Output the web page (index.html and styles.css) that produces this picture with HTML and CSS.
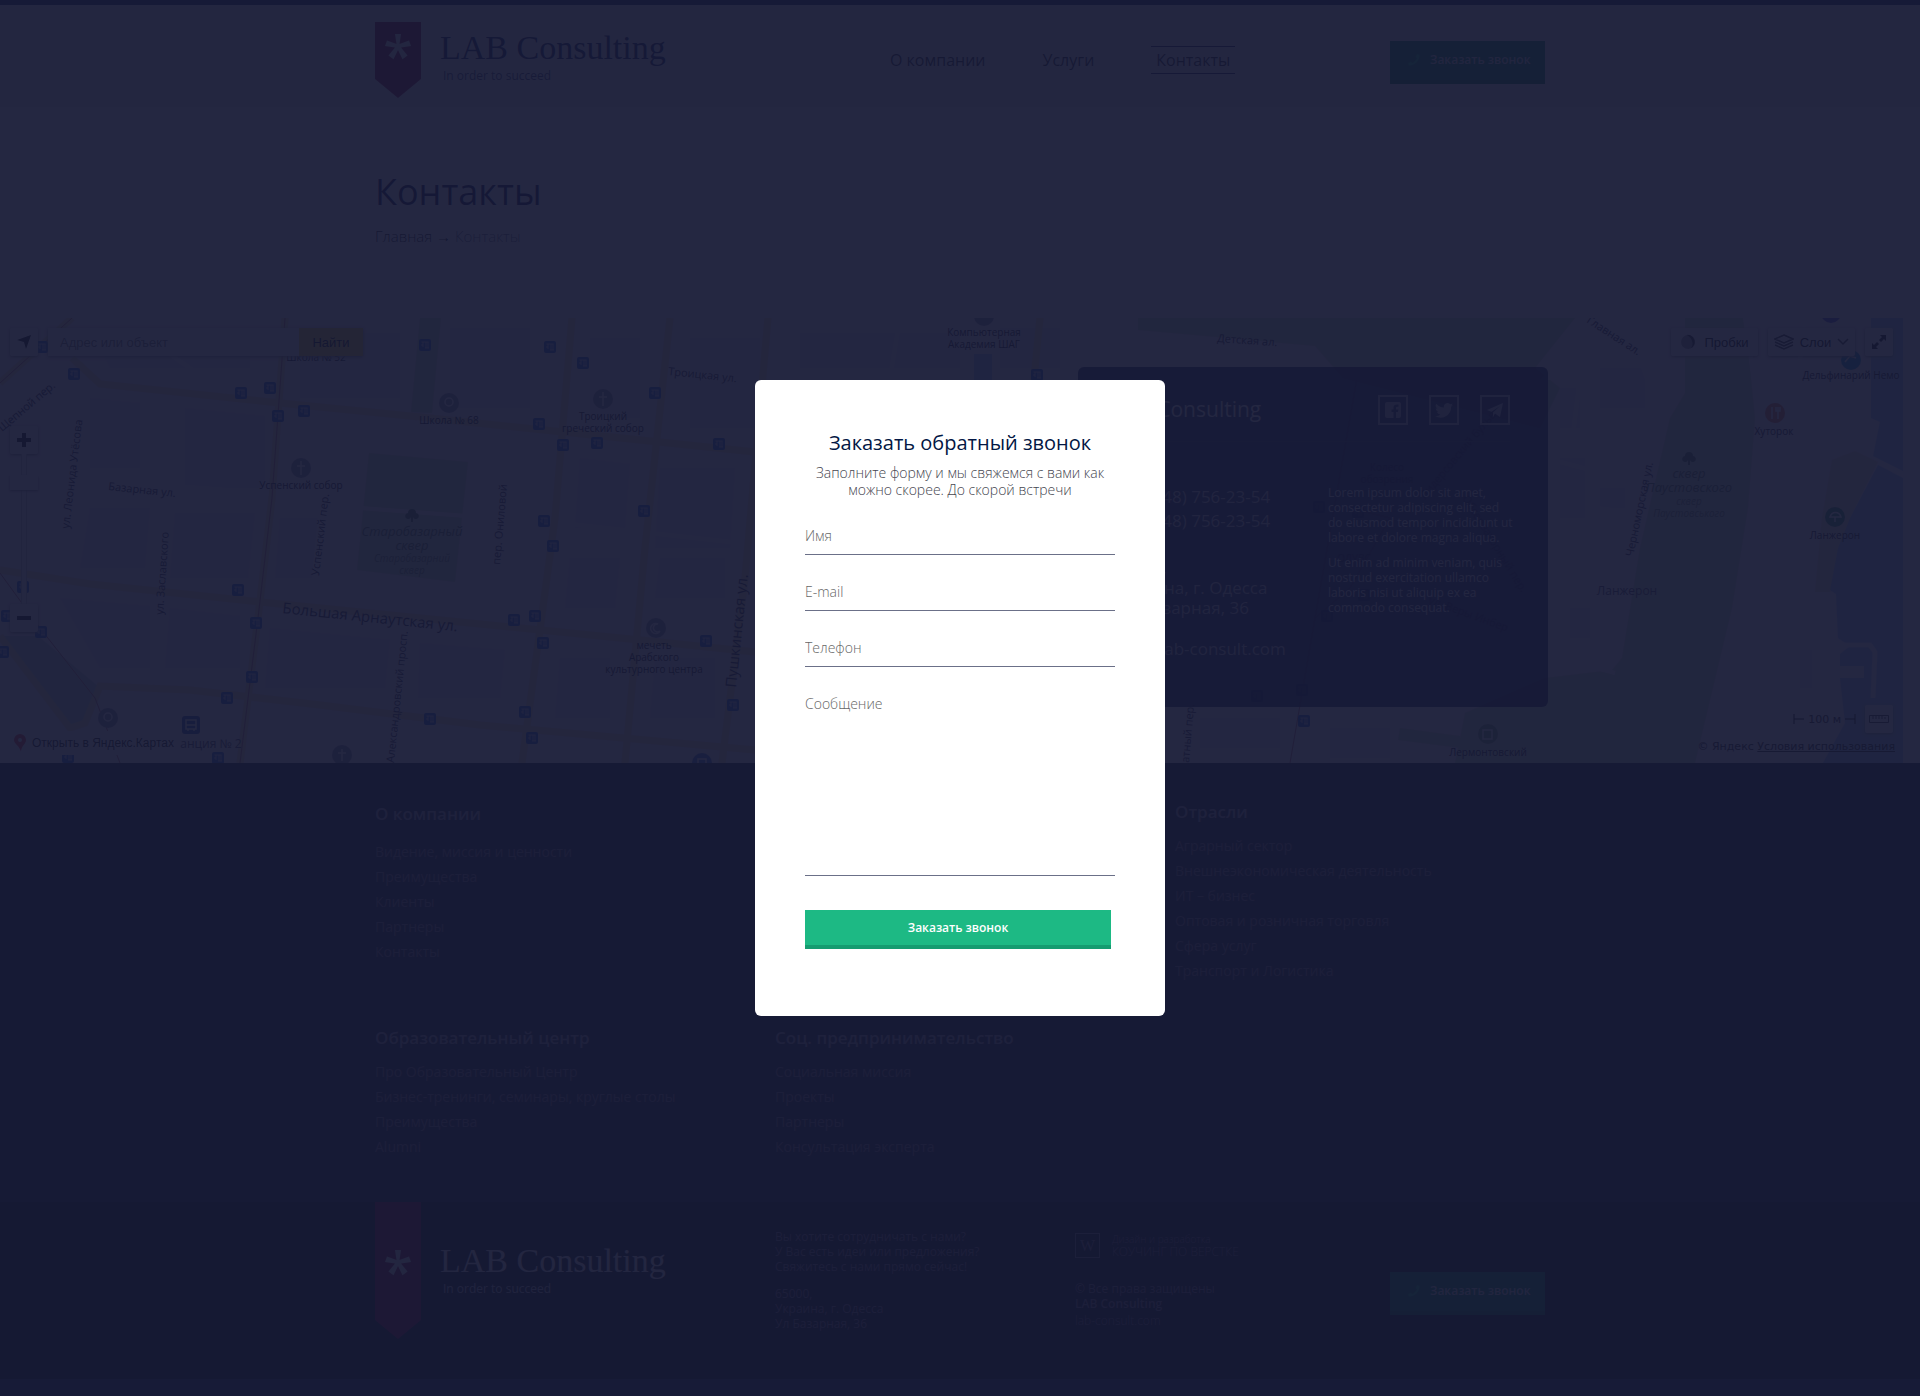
FILE: index.html
```html
<!DOCTYPE html>
<html lang="ru">
<head>
<meta charset="utf-8">
<meta name="viewport" content="width=device-width, initial-scale=1">
<title>Контакты — LAB Consulting</title>
<link rel="stylesheet" href="styles.css">
</head>
<body>
<svg class="sprite" aria-hidden="true">
  <symbol id="asterisk" viewBox="0 0 26 26">
    <path d="M10 0h6l-1.500 10 9.500-3.500 2 5.500-10 1.600 6.500 8-5 3.600L13 16l-4.500 9.200-5-3.600 6.500-8L0 12l2-5.500L11.500 10z"/>
  </symbol>
  <symbol id="phone" viewBox="0 0 14 14">
    <path d="M10.500 0l3 .8c.2 7-5.500 12.700-12.500 12.700L.2 10.400l3.200-1.500 1.400 1.700c2.400-1.200 4.400-3.200 5.600-5.600L8.900 3.400z"/>
  </symbol>
  <g id="stop">
    <rect width="12" height="12" rx="2" fill="#2a68d8"/>
    <path d="M2.500 3h7M4 3v5M7 3v6M9 3v6M6 9h4M2 6h2" stroke="#c8d4f0" fill="none"/>
  </g>
</svg>

<header class="header">
  <div class="container header-row">
    <a class="logo" href="#">
      <span class="ribbon"><svg class="ribbon-mark"><use href="#asterisk"/></svg></span>
      <span class="logo-text"><span class="logo-name">LAB Consulting</span><span class="logo-tagline">In order to succeed</span></span>
    </a>
    <nav class="nav">
      <a class="nav-link" href="#">О компании</a>
      <a class="nav-link" href="#">Услуги</a>
      <a class="nav-link nav-link-active" href="#">Контакты</a>
    </nav>
    <button class="call-button" type="button"><svg class="call-icon"><use href="#phone"/></svg>Заказать звонок</button>
  </div>
</header>

<main>
  <div class="container intro">
    <h1 class="page-title">Контакты</h1>
    <p class="breadcrumbs"><a href="#">Главная</a> → <span class="breadcrumbs-current">Контакты</span></p>
  </div>

  <section class="map-section">
    <div class="map">
      <svg class="map-canvas" viewBox="0 0 1903 445" preserveAspectRatio="xMinYMin slice">
        <rect width="1903" height="445" fill="#f6f0f4"/>
        <g fill="#cfe3c4">
          <path d="M369 135L468 144 455 264 357 252z"/>
          <path d="M420 0H441L432 95 411 94z"/>
          <path d="M0 318L38 318 100 370 84 406 66 408z" fill="#c3dfd8"/>
          <path d="M1138 0H1575L1535 50 1560 70 1540 110 1343 60 1315 28 1138 12z"/>
          <path d="M1685 0H1745L1755 100 1748 190 1732 290 1695 445H1455L1465 395 1545 360 1612 352 1622 340 1640 230 1670 100 1685 75z"/>
          <path d="M1400 410L1460 418 1460 430 1398 422z"/>
        </g>
        <path d="M1832 142L1855 133 1878 144 1850 200 1830 274H1815L1822 200z" fill="#efe9c8"/>
        <g fill="#a9cdf0">
          <path d="M1871 0H1903V153L1873 138 1880 104 1871 100z"/>
          <path d="M1878 147L1903 160V445H1823L1845 405 1840 360H1864V348H1840V336L1850 328 1838 320 1836 276 1830 272 1838 230 1850 200z"/>
          <path d="M974 36H992V62H974z"/>
        </g>
        <path d="M1840 327H1870L1875 334 1873 380" fill="none" stroke="#f6f0f4" stroke-width="5"/>
        <g class="map-blocks">
          <path d="M90 10H250V50H110zM300 15H400V80H300zM450 10H530V90H450zM90 80L140 85V150H90zM185 90L265 98V170H185zM90 190H150L145 250H80zM175 195H255L248 260H170zM280 200H320L315 260H275zM60 280L150 288V350H100zM170 290L240 298V350H165zM270 310L390 322 385 370H265zM420 325L505 332 500 380H418zM590 20H640V100H590zM690 20H760V110H690zM580 140L630 146 625 210H575zM660 150H735L730 230H655zM570 240H620L615 290H565zM660 240H725V280H655zM655 340H715V400H650zM560 340H610V400H555zM800 15H960V50H800zM1000 10H1060V50H1000zM1560 70H1580V110H1560zM1600 50H1645V90H1600zM1560 140H1585V200H1560zM1600 170H1625V190H1600zM1570 290H1590V320H1570zM1800 332H1812V370H1800zM1200 400H1280V430H1200zM1330 410H1390V440H1330z"/>
        </g>
        <g class="map-lanes">
          <path d="M82 60L60 260M178 80L150 370M330 100L312 280M505 120L485 310M0 155L265 175 360 190 560 205 740 225M410 275L395 445M420 100L415 130M150 22L225 75M900 0L890 60M1130 0V50M1545 140L1640 165 1660 120M1595 150V190L1635 195M1545 300L1560 340 1615 355M1745 0L1758 90 1775 130 1810 230 1785 380M1805 0L1798 60 1828 135 1850 60M1802 215L1755 240 1740 260M1400 300L1395 445M1575 30L1545 60 1580 60 1570 140M1640 40L1650 70 1680 75"/>
        </g>
        <g class="map-roads">
          <path d="M0 65L72 0M72 40L100 66 270 84 420 99 640 122 755 134"/>
          <path d="M0 252L90 266 270 285 400 298 640 322 755 334"/>
          <path d="M0 318L70 410 85 405 100 368 190 372 320 387 480 407 755 432"/>
          <path d="M285 0L272 180 258 300 240 445M572 0L555 200 522 445M670 0L645 230 625 445M768 0L745 260 722 445M1040 0L1030 100"/>
        </g>
        <path d="M285 0L272 180 258 300 240 445M0 65L72 0M0 255L40 310 95 380 120 445M1357 60L1315 300 1290 445M1315 300L1350 270 1390 200 1350 190" fill="none" stroke="#c0707a" stroke-width="1"/>
        <g class="map-stops">
          <use href="#stop" x="68" y="50"/><use href="#stop" x="235" y="69"/><use href="#stop" x="264" y="64"/><use href="#stop" x="272" y="92"/><use href="#stop" x="298" y="87"/><use href="#stop" x="419" y="21"/><use href="#stop" x="544" y="23"/><use href="#stop" x="577" y="39"/><use href="#stop" x="533" y="100"/><use href="#stop" x="557" y="121"/><use href="#stop" x="591" y="119"/><use href="#stop" x="538" y="197"/><use href="#stop" x="547" y="222"/><use href="#stop" x="508" y="296"/><use href="#stop" x="529" y="292"/><use href="#stop" x="537" y="319"/><use href="#stop" x="232" y="266"/><use href="#stop" x="250" y="299"/><use href="#stop" x="246" y="353"/><use href="#stop" x="221" y="374"/><use href="#stop" x="212" y="434"/><use href="#stop" x="424" y="395"/><use href="#stop" x="519" y="388"/><use href="#stop" x="526" y="414"/><use href="#stop" x="17" y="263"/><use href="#stop" x="1" y="292"/><use href="#stop" x="35" y="308"/><use href="#stop" x="-3" y="328"/><use href="#stop" x="36" y="23"/><use href="#stop" x="62" y="433"/><use href="#stop" x="649" y="69"/><use href="#stop" x="713" y="120"/><use href="#stop" x="638" y="187"/><use href="#stop" x="700" y="317"/><use href="#stop" x="727" y="381"/><use href="#stop" x="1031" y="51"/><use href="#stop" x="1298" y="397"/><use href="#stop" x="1313" y="183"/><use href="#stop" x="1352" y="188"/><use href="#stop" x="1358" y="271"/><use href="#stop" x="1321" y="292"/><use href="#stop" x="1296" y="366"/><use href="#stop" x="1251" y="372"/>
        </g>
        <g fill="#8f94ac">
          <circle cx="449" cy="85" r="10"/><circle cx="603" cy="81" r="10"/><circle cx="301" cy="150" r="10"/><circle cx="108" cy="400" r="10"/><circle cx="342" cy="437" r="10"/><circle cx="656" cy="310" r="10"/><circle cx="984" cy="-2" r="10"/><circle cx="1488" cy="416" r="10" fill="#78a07e"/>
          <circle cx="1775" cy="95" r="10" fill="#e8704a"/><circle cx="1851" cy="42" r="10" fill="#1f9ad0"/><circle cx="1835" cy="199" r="10" fill="#3f9468"/><circle cx="702" cy="445" r="10" fill="#4a7ad0"/><circle cx="1831" cy="-5" r="10" fill="#5a55d8"/>
          <rect x="182" y="398" width="18" height="18" rx="3" fill="#2a55b0"/>
        </g>
        <g fill="none" stroke="#fff" stroke-width="1.500">
          <path d="M603 74v14M599 79h8M301 143v14M297 148h8M342 431v12M338 435h8M1772 89v12M1778 89v12M1776 89v4h4v-4M1845 44l5-6 6 2M1830 199c2-6 9-6 11 0zM1835 199v5M1483 412h9v9h-9zM698 441h8v6h-8z"/>
          <circle cx="449" cy="84" r="4"/><circle cx="108" cy="399" r="4"/><path d="M660 313a5 5 0 1 1-2-7a4 4 0 1 0 2 7M186 402h10v9h-10zM186 407h10M188 411v2M194 411v2"/>
        </g>
        <g fill="#527a5a">
          <path d="M412 191a4 4 0 0 1 4 4a3 3 0 1 1-3 4v5h-2v-5a3 3 0 1 1-3-4a4 4 0 0 1 4-4zM1689 134a4 4 0 0 1 4 4a3 3 0 1 1-3 4v5h-2v-5a3 3 0 1 1-3-4a4 4 0 0 1 4-4z"/>
        </g>
        <g class="map-park">
          <text x="412" y="218">Старобазарный</text><text x="412" y="232">сквер</text>
          <text class="map-small" x="412" y="244">Старобазарний</text><text class="map-small" x="412" y="256">сквер</text>
          <text x="1689" y="160">сквер</text><text x="1689" y="174">Паустовского</text>
          <text class="map-small" x="1689" y="187">сквер</text><text class="map-small" x="1689" y="199">Паустовського</text>
        </g>
        <g class="map-places">
          <text x="316" y="43">Школа № 52</text><text x="449" y="106">Школа № 68</text>
          <text x="603" y="102">Троицкий</text><text x="603" y="114">греческий собор</text>
          <text x="301" y="171">Успенский собор</text>
          <text x="654" y="331">мечеть</text><text x="654" y="343">Арабского</text><text x="654" y="355">культурного центра</text>
          <text x="984" y="18">Компьютерная</text><text x="984" y="30">Академия ШАГ</text>
          <text x="1774" y="117">Хуторок</text><text x="1851" y="61">Дельфинарий Немо</text>
          <text x="1835" y="221">Ланжерон</text><text class="map-district" x="1627" y="277">Ланжерон</text>
          <text x="1488" y="438">Лермонтовский</text><text class="map-station" x="211" y="430">анция № 2</text>
          <text x="1387" y="153">Колесо</text><text x="1387" y="165">обозрения</text><text x="1354" y="244">ОДУВС</text>
        </g>
        <g class="map-streets">
          <text transform="translate(2 114) rotate(-40)">Щепной пер.</text>
          <text transform="translate(69 211) rotate(-83)">ул. Леонида Утёсова</text>
          <text transform="translate(163 297) rotate(-86)">ул. Заславского</text>
          <text transform="translate(108 172) rotate(6)">Базарная ул.</text>
          <text transform="translate(319 258) rotate(-83)">Успенский пер.</text>
          <text transform="translate(500 247) rotate(-85)">пер. Ониловой</text>
          <text transform="translate(394 445) rotate(-84)">Александровский просп.</text>
          <text transform="translate(668 57) rotate(6)">Троицкая ул.</text>
          <text transform="translate(1217 24) rotate(4)">Детская ал.</text>
          <text transform="translate(1189 445) rotate(-85)">атный пер.</text>
          <text transform="translate(1633 239) rotate(-78)">Черноморская ул.</text>
          <text transform="translate(1586 4) rotate(33)">Главная ал.</text>
          <text transform="translate(1425 182) rotate(-50)">Лидерсовский бульв.</text>
          <text transform="translate(1462 180) rotate(58)">Обсерваторный пер.</text>
          <text transform="translate(1428 285) rotate(20)">ул. Веры Инбер</text>
          <text class="map-avenue" transform="translate(282 295) rotate(6)">Большая Арнаутская ул.</text>
          <text class="map-avenue" transform="translate(736 370) rotate(-84)">Пушкинская ул.</text>
        </g>
      </svg>

      <div class="map-search">
        <button class="map-button" type="button" aria-label="Моё местоположение"><svg viewBox="0 0 16 16" width="16" height="16"><path d="M15 1L10 15 8 8 1 6z"/></svg></button>
        <form class="map-search-form">
          <input class="map-search-input" type="text" aria-label="Адрес или объект" placeholder="Адрес или объект">
          <button class="map-search-submit" type="button">Найти</button>
        </form>
      </div>
      <div class="map-zoom">
        <button class="map-button" type="button" aria-label="Приблизить"><svg viewBox="0 0 14 14" width="14" height="14"><path d="M5 0h4v5h5v4H9v5H5V9H0V5h5z"/></svg></button>
        <div class="map-zoom-track"><span class="map-zoom-handle"></span></div>
        <button class="map-button" type="button" aria-label="Отдалить"><svg viewBox="0 0 14 14" width="14" height="14"><path d="M0 5h14v4H0z"/></svg></button>
      </div>
      <a class="map-open" href="#"><svg viewBox="0 0 12 18" width="12" height="18"><path fill="#e8363a" fill-rule="evenodd" d="M6 0a6 6 0 0 1 6 6c0 4-5 6-5 12C6 12 0 10 0 6a6 6 0 0 1 6-6zm0 4a2 2 0 1 0 0 4a2 2 0 0 0 0-4z"/></svg>Открыть в Яндекс.Картах</a>
      <div class="map-tools">
        <button class="map-button map-button-text" type="button"><svg viewBox="0 0 18 18" width="18" height="16"><circle cx="8" cy="9" r="8" fill="#999"/><path d="M6 1a8 8 0 0 1 5 15c4-3 2-13-5-15z" fill="#222"/></svg>Пробки</button>
        <button class="map-button map-button-text" type="button"><svg viewBox="0 0 20 18" width="20" height="18" fill="none" stroke="#333" stroke-width="1.500"><path d="M10 2l9 4-9 4-9-4zM1 9l9 4 9-4M1 12l9 4 9-4"/></svg>Слои<svg viewBox="0 0 12 8" width="12" height="8" fill="none" stroke="#333" stroke-width="1.500"><path d="M1 1l5 5 5-5"/></svg></button>
        <button class="map-button" type="button" aria-label="Во весь экран"><svg viewBox="0 0 16 16" width="16" height="16"><path d="M9 1h6v6l-2-2-3 3-2-2 3-3zM7 15H1V9l2 2 3-3 2 2-3 3z"/></svg></button>
      </div>
      <div class="map-scale">
        <svg viewBox="0 0 11 10" width="11" height="10" fill="none" stroke="#000"><path d="M1 0v10M1 5h10"/></svg>100 м<svg viewBox="0 0 11 10" width="11" height="10" fill="none" stroke="#000"><path d="M10 0v10M0 5h10"/></svg>
        <button class="map-button" type="button" aria-label="Линейка"><svg viewBox="0 0 20 8" width="20" height="8" fill="none" stroke="#333"><path d="M.5.5h19v7H.5zM4 1v3M7 1v3M10 1v3M13 1v3M16 2v2"/></svg></button>
      </div>
      <p class="map-copyright">© Яндекс <a href="#">Условия использования</a></p>
    </div>

    <div class="container map-overlay">
      <article class="card">
        <div class="card-head">
          <h2 class="card-title">LAB Consulting</h2>
          <div class="socials">
            <a class="social" href="#" aria-label="Facebook"><svg viewBox="0 0 16 16" width="16" height="16"><path fill-rule="evenodd" d="M2 0h12a2 2 0 0 1 2 2v12a2 2 0 0 1-2 2h-3v-6h2l.4-2.500H11V6c0-1 .5-1.300 1.300-1.300h1.200V2.500C10.500 2 8.500 3 8.500 5.500v2h-2V10h2v6H2a2 2 0 0 1-2-2V2a2 2 0 0 1 2-2z"/></svg></a>
            <a class="social" href="#" aria-label="Twitter"><svg viewBox="0 0 24 20" width="18" height="15"><path d="M24 2.400c-.9.400-1.800.7-2.800.8 1-.6 1.800-1.600 2.200-2.700-1 .6-2 1-3.100 1.200A4.900 4.900 0 0 0 11.900 6.100C7.800 5.900 4.200 4 1.700.9a4.900 4.900 0 0 0 1.500 6.600C2.400 7.500 1.600 7.200 1 6.900c0 2.300 1.600 4.400 3.900 4.900-.7.200-1.500.2-2.200.1.600 2 2.400 3.400 4.600 3.400A9.900 9.900 0 0 1 0 17.300 14 14 0 0 0 21.500 4.900c1-.7 1.800-1.600 2.500-2.500z"/></svg></a>
            <a class="social" href="#" aria-label="Telegram"><svg viewBox="0 0 16 15" width="16" height="15"><path d="M16 0l-3 14-5-3.500L6 14V9.500L13 3 4.500 8.800 0 7z"/></svg></a>
          </div>
        </div>
        <div class="card-body">
          <address class="card-contacts">
            <p class="card-phones"><a href="#">+38 (048) 756-23-54</a><br><a href="#">+38 (048) 756-23-54</a></p>
            <p class="card-address">65000,<br>Украина, г. Одесса<br>Ул. Базарная, 36</p>
            <p><a href="#">info@lab-consult.com</a></p>
          </address>
          <div class="card-about">
            <p>Lorem ipsum dolor sit amet,<br>consectetur adipiscing elit, sed<br>do eiusmod tempor incididunt ut<br>labore et dolore magna aliqua.</p>
            <p>Ut enim ad minim veniam, quis<br>nostrud exercitation ullamco<br>laboris nisi ut aliquip ex ea<br>commodo consequat.</p>
          </div>
        </div>
      </article>
    </div>
  </section>
</main>

<footer class="footer">
  <div class="container sitemap">
    <section class="sitemap-group sitemap-lead">
      <h3 class="sitemap-title">О компании</h3>
      <ul><li><a href="#">Видение, миссия и ценности</a></li><li><a href="#">Преимущества</a></li><li><a href="#">Клиенты</a></li><li><a href="#">Партнеры</a></li><li><a href="#">Контакты</a></li></ul>
    </section>
    <section class="sitemap-group sitemap-last">
      <h3 class="sitemap-title">Отрасли</h3>
      <ul><li><a href="#">Аграрный сектор</a></li><li><a href="#">Внешнеэкономическая деятельность</a></li><li><a href="#">ИТ – бизнес</a></li><li><a href="#">Оптовая и розничная торговля</a></li><li><a href="#">Сфера услуг</a></li><li><a href="#">Транспорт и Логистика</a></li></ul>
    </section>
    <section class="sitemap-group">
      <h3 class="sitemap-title">Образовательный центр</h3>
      <ul><li><a href="#">Про Образовательный Центр</a></li><li><a href="#">Бизнес-тренинги, семинары, круглые столы</a></li><li><a href="#">Преимущества</a></li><li><a href="#">Alumni</a></li></ul>
    </section>
    <section class="sitemap-group">
      <h3 class="sitemap-title">Соц. предпринимательство</h3>
      <ul><li><a href="#">Социальная миссия</a></li><li><a href="#">Проекты</a></li><li><a href="#">Партнеры</a></li><li><a href="#">Консультация эксперта</a></li></ul>
    </section>
  </div>
  <div class="bottom">
    <div class="container bottom-row">
      <a class="logo logo-light" href="#">
        <span class="ribbon ribbon-long"><svg class="ribbon-mark"><use href="#asterisk"/></svg></span>
        <span class="logo-text"><span class="logo-name">LAB Consulting</span><span class="logo-tagline">In order to succeed</span></span>
      </a>
      <div class="bottom-text">
        <p>Вы хотите сотрудничать с нами?<br>У Вас есть идеи или предложения?<br>Свяжитесь с нами прямо сейчас!</p>
        <p>65000,<br>Украина, г. Одесса<br>Ул Базарная, 36</p>
      </div>
      <div class="bottom-text bottom-credits">
        <a class="studio" href="#"><span class="studio-mark">W</span><span class="studio-text"><small>Дизайн и разработка</small>КОУЧИНГ ПО ВЕРСТКЕ</span></a>
        <p>© Все права защищены<br><b>LAB Consulting</b></p>
        <a href="#">lab-consult.com</a>
      </div>
      <button class="call-button" type="button"><svg class="call-icon"><use href="#phone"/></svg>Заказать звонок</button>
    </div>
  </div>
</footer>

<div class="backdrop">
  <div class="modal" role="dialog" aria-modal="true" aria-labelledby="modal-title">
    <h2 class="modal-title" id="modal-title">Заказать обратный звонок</h2>
    <p class="modal-lead">Заполните форму и мы свяжемся с вами как можно скорее. До скорой встречи</p>
    <form class="modal-form">
      <input class="field" type="text" aria-label="Имя" placeholder="Имя">
      <input class="field" type="email" aria-label="E-mail" placeholder="E-mail">
      <input class="field" type="tel" aria-label="Телефон" placeholder="Телефон">
      <textarea class="field field-message" aria-label="Сообщение" placeholder="Сообщение"></textarea>
      <button class="submit" type="button">Заказать звонок</button>
    </form>
  </div>
</div>
</body>
</html>
```

FILE: styles.css
```css
* { box-sizing: border-box; }

body {
  margin: 0;
  background: #2f3a50;
  color: #0a0f45;
  font-family: "Open Sans", "Noto Sans", sans-serif;
  font-size: 14px;
}

h1, h2, h3, p, ul { margin: 0; padding: 0; font-weight: 400; }
ul { list-style: none; }
a { color: inherit; text-decoration: none; }
button, input, textarea { font-family: inherit; border: 0; border-radius: 0; padding: 0; }
address { font-style: normal; }

.sprite { display: none; }

.container { width: 100%; max-width: 1170px; margin: 0 auto; }

/* Header */
.header { border-top: 5px solid #1f2a5c; background: #eceded; }
.header-row {
  display: grid;
  grid-template-columns: 515px auto 1fr;
  align-items: center;
  padding: 17px 0 9px;
}

.logo { display: flex; align-items: flex-start; gap: 19px; color: #0a1150; }
.ribbon {
  display: block;
  width: 46px;
  height: 76px;
  padding: 12px 10px 0;
  background: #8f0f3c;
  clip-path: polygon(0 0, 100% 0, 100% calc(100% - 19px), 50% 100%, 0 calc(100% - 19px));
}
.ribbon-mark { display: block; width: 26px; height: 26px; fill: #ececec; }
.ribbon-long { height: 137px; padding-top: 48px; }
.logo-text { display: flex; flex-direction: column; padding-top: 6px; }
.logo-name {
  font-family: "Liberation Serif", serif;
  font-size: 34px;
  line-height: 40px;
}
.logo-tagline { padding-left: 3px; font-size: 12px; line-height: 16px; opacity: .8; }
.logo-light { color: #e6e6ea; }
.logo-light .logo-text { padding-top: 39px; }

.nav { display: flex; align-items: center; gap: 57px; font-size: 16px; font-weight: 500; line-height: 26px; color: #1c1c2c; }
.nav-link-active { padding: 0 5px; border: solid #1c1c50; border-width: 1px 0; }

.call-button {
  display: flex;
  justify-self: end;
  gap: 10px;
  width: 155px;
  height: 43px;
  margin-top: 4px;
  padding: 9px 0 0 18px;
  background: #038a50;
  border-bottom: 4px solid #037a48;
  color: #d5d5dd;
  font-size: 12px;
  font-weight: 600;
  line-height: 20px;
  white-space: nowrap;
}
.call-icon { width: 12px; height: 14px; margin-top: 3px; flex: none; fill: #10c878; }

/* Page intro */
.intro { padding: 63px 0 72px; }
.page-title { font-size: 36px; line-height: 44px; }
.breadcrumbs { margin-top: 12px; font-size: 15px; font-weight: 300; line-height: 20px; color: #101020; }
.breadcrumbs-current { color: #6a6a7e; }
main { background: #fff; }

/* Map */
.map-section { position: relative; }
.map { position: relative; height: 445px; margin-right: 17px; overflow: hidden; }
.map-canvas { display: block; width: 100%; height: 445px; }
.map-blocks { fill: #efe9f1; }
.map-lanes { fill: none; stroke: #fff; stroke-width: 4px; }
.map-roads { fill: none; stroke: #f0e2b4; stroke-width: 7px; }
.map-park { font-size: 13px; font-style: italic; fill: #527a5a; text-anchor: middle; }
.map-park .map-small { font-size: 10px; fill: #6b9070; }
.map-places { font-size: 10px; fill: #14142c; text-anchor: middle; }
.map-places .map-station, .map-places .map-district { font-size: 12px; fill: #4a4a60; }
.map-streets { font-size: 11px; fill: #2c2c48; }
.map-streets .map-avenue { font-size: 15px; }

.map-button {
  display: flex;
  align-items: center;
  justify-content: center;
  width: 28px;
  height: 28px;
  background: #fff;
  border-radius: 2px;
  box-shadow: 0 1px 3px #888;
  font-family: "Liberation Sans", sans-serif;
  font-size: 13px;
}
.map-button-text { gap: 6px; width: 87px; }

.map-search { position: absolute; top: 10px; left: 10px; display: flex; gap: 10px; }
.map-search-form { display: flex; width: 315px; height: 28px; box-shadow: 0 1px 3px #888; }
.map-search-input { flex: 1; min-width: 0; padding: 0 12px; font: 13px "Liberation Sans", sans-serif; }
.map-search-submit { width: 64px; background: #ffdb4d; font: 13px "Liberation Sans", sans-serif; }

.map-zoom { position: absolute; top: 108px; left: 10px; }
.map-zoom-track { width: 6px; height: 150px; margin: 0 auto; padding-top: 21px; background: #f4f4f8; border: solid #ccc; border-width: 0 1px; }
.map-zoom-handle { display: block; width: 28px; height: 15px; margin-left: -12px; background: #fff; box-shadow: 0 1px 2px #888; }

.map-open {
  position: absolute;
  left: 8px;
  bottom: 8px;
  display: flex;
  align-items: center;
  gap: 6px;
  height: 24px;
  padding: 0 6px;
  background: #fff;
  color: #111;
  font: 12px "Liberation Sans", sans-serif;
}
.map-tools { position: absolute; top: 10px; right: 10px; display: flex; gap: 10px; }
.map-scale { position: absolute; right: 10px; bottom: 30px; display: flex; align-items: center; gap: 4px; font: 11px "DejaVu Sans", sans-serif; color: #222; }
.map-scale .map-button { margin-left: 5px; }
.map-copyright { position: absolute; right: 5px; bottom: 10px; padding: 0 3px; font: 11px "DejaVu Sans", sans-serif; color: #222; }
.map-copyright a { text-decoration: underline; }

/* Contact card */
.map-overlay { position: absolute; top: 49px; left: 0; right: 0; display: flex; justify-content: flex-end; }
.card {
  width: 470px;
  height: 340px;
  margin-right: -3px;
  padding: 28px 38px 0 36px;
  border-radius: 6px;
  background: rgba(6, 16, 72, .86);
  color: #f0f0f4;
}
.card-head { display: flex; align-items: flex-start; justify-content: space-between; height: 47px; border-bottom: 1px solid #39406a; }
.card-title { font-size: 21px; line-height: 28px; }
.socials { display: flex; gap: 21px; }
.social { display: flex; align-items: center; justify-content: center; width: 30px; height: 30px; border: 2px solid #b9bccd; fill: #b9bccd; }
.card-body { display: flex; justify-content: space-between; padding-top: 43px; color: #c8c8d4; font-size: 17px; line-height: 20px; }
.card-phones { line-height: 24px; }
.card-address { margin: 25px 0 21px; }
.card-about { width: 182px; font-size: 12px; line-height: 15px; white-space: nowrap; font-weight: 300; color: #e4e4ee; }
.card-about p + p { margin-top: 10px; }

/* Footer */
.footer { background: #1e2436; color: #7e7282; }
.sitemap { display: grid; grid-template-columns: 400px 400px 1fr; row-gap: 43px; padding: 37px 0 43px; }
.sitemap-title { margin-bottom: 9px; color: #9c9aac; font-size: 17px; font-weight: 600; line-height: 24px; }
.sitemap-group { line-height: 25px; font-weight: 300; }
.sitemap-lead { padding-top: 2px; }
.sitemap-lead .sitemap-title { margin-bottom: 13px; }
.sitemap-last { grid-column: 3; }

.bottom { background: #0a1118; }
.bottom-row { display: grid; grid-template-columns: 400px 300px 1fr auto; height: 177px; align-items: start; }
.bottom-text { padding-top: 27px; font-size: 12px; line-height: 15px; font-weight: 300; }
.bottom-text p + p { margin-top: 12px; }
.bottom-credits { padding-top: 31px; }
.bottom-credits p { margin: 23px 0 2px; }
.bottom-credits b { font-weight: 600; }
.studio { display: flex; align-items: center; gap: 12px; line-height: 13px; }
.studio-mark { width: 25px; height: 25px; border: 1px solid #76708a; font: 16px/23px "Liberation Serif", serif; text-align: center; }
.studio-text small { display: block; font-size: 10px; line-height: 12px; }
.bottom .call-button { margin-top: 70px; }
.footer::after { content: ""; display: block; height: 17px; background: #2c3656; }

/* Callback dialog */
.backdrop {
  position: fixed;
  inset: 0;
  display: flex;
  align-items: center;
  justify-content: center;
  background: rgba(22, 26, 53, .94);
}
.modal {
  width: 410px;
  padding: 48px 50px 67px;
  border-radius: 6px;
  background: #fff;
  text-align: center;
}
.modal-title { color: #031744; font-size: 20px; line-height: 30px; }
.modal-lead { margin: 6px 0 17px; color: #45464f; font-size: 14px; font-weight: 300; line-height: 17px; }
.modal-form { display: flex; flex-direction: column; gap: 16px; }
.field {
  display: block;
  width: 100%;
  height: 40px;
  padding-top: 2px;
  border-bottom: 1px solid #6b7088;
  background: none;
  font-size: 14px;
  font-weight: 300;
  line-height: 18px;
}
.field::placeholder { color: #666; opacity: 1; }
.field-message { height: 193px; padding-top: 12px; resize: none; }
.submit {
  width: 306px;
  height: 39px;
  margin-top: 18px;
  border-bottom: 4px solid #159c70;
  background: #1db984;
  color: #fff;
  font-size: 12px;
  font-weight: 600;
}
```
